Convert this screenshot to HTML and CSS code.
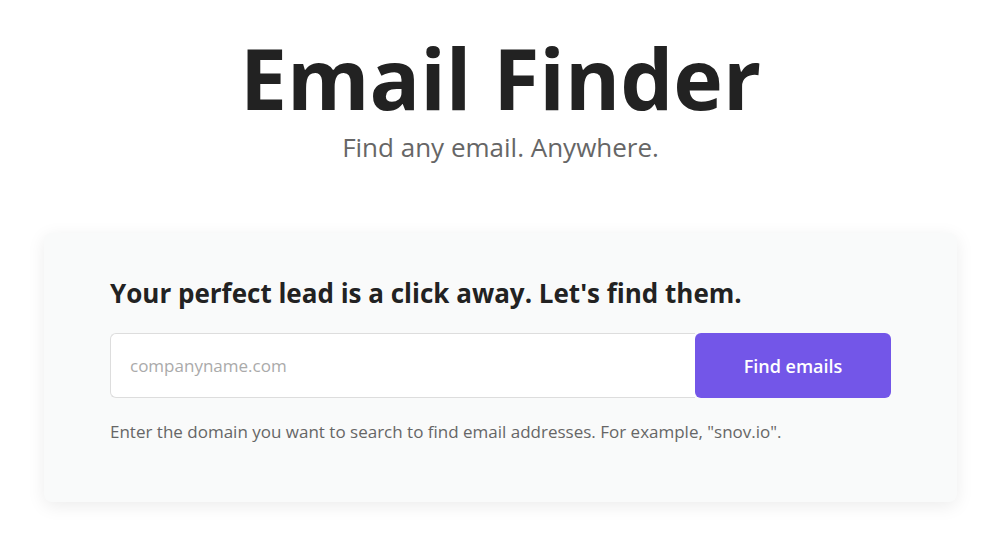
FILE: index.html
```html
<!DOCTYPE html>
<html lang="en">
<head>
    <meta charset="UTF-8">
    <meta name="viewport" content="width=device-width, initial-scale=1.0">
    <title>Email Finder</title>
    <link rel="stylesheet" href="styles.css">
</head>
<body>
    <div class="page">
        <div class="hero">
            <h1>Email Finder</h1>
            <p class="subtitle">Find any email. Anywhere.</p>
        </div>
        <div class="card">
            <h2>Your perfect lead is a click away. Let's find them.</h2>
            <form class="search" onsubmit="return false">
                <input type="text" placeholder="companyname.com">
                <button type="submit">Find emails</button>
            </form>
            <p class="hint">Enter the domain you want to search to find email addresses. For example, "snov.io".</p>
        </div>
    </div>
</body>
</html>
```

FILE: styles.css
```css
html, body {
    margin: 0;
    padding: 0;
    background: #fff;
}
body {
    font-family: "Open Sans", Arial, sans-serif;
    color: #222;
}
.page {
    width: 1000px;
    height: 541px;
    box-sizing: border-box;
    padding: 33px 43px 0 44px;
}
.hero {
    text-align: center;
}
.hero h1 {
    margin: 0;
    font-size: 84px;
    font-weight: 700;
    line-height: 90px;
    color: #222;
}
.subtitle {
    margin: 8px 0 0;
    font-size: 26px;
    line-height: 32px;
    color: #666;
}
.card {
    margin-top: 70px;
    background: #f9fafa;
    border-radius: 8px;
    box-shadow: 0 4px 18px rgba(0, 0, 0, 0.08);
    padding: 42px 66px 58px;
}
.card h2 {
    margin: 0;
    font-size: 26px;
    font-weight: 700;
    line-height: 36px;
    color: #222;
}
.search {
    display: flex;
    margin-top: 22px;
}
.search input {
    flex: 1;
    height: 65px;
    box-sizing: border-box;
    padding: 0 19px;
    border: 1px solid #ddd;
    border-right: none;
    border-radius: 6px 0 0 6px;
    font-family: inherit;
    font-size: 17px;
    color: #333;
    background: #fff;
    outline: none;
}
.search input::placeholder {
    color: #aaa;
}
.search button {
    width: 196px;
    height: 65px;
    border: none;
    border-radius: 6px;
    background: #7356e8;
    color: #fff;
    font-family: inherit;
    font-size: 18px;
    font-weight: 600;
    cursor: pointer;
}
.hint {
    margin: 22px 0 0;
    font-size: 17px;
    line-height: 24px;
    color: #666;
}
```
